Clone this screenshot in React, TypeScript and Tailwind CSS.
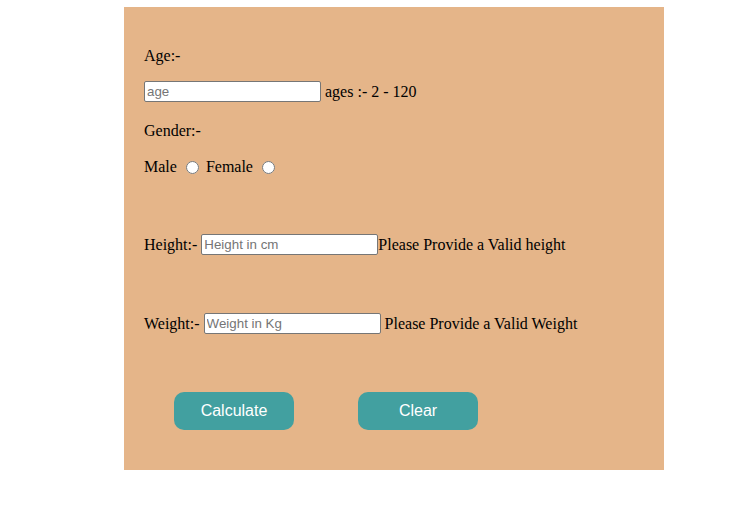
export default function App() {
  return (
    <div className="min-h-[507px] bg-white pt-[7px] pl-[124px] font-['Liberation_Serif',serif] text-[16px] text-black">
      <div className="w-[540px] bg-[#e5b589] pl-[20px] pt-[40px] pb-[40px]">
        {/* age */}
        <div className="flex h-[18px] items-center">Age:-</div>
        <div className="mt-[16px] flex h-[21px] items-center">
          <input
            type="text"
            placeholder="age"
            className="h-[21px] w-[177px] rounded-[2px] border border-[#767676] bg-white px-[2px] font-['Liberation_Sans',sans-serif] text-[13.33px] placeholder:text-[#757575]"
          />
          <span className="ml-[4px]">ages :- 2 - 120</span>
        </div>

        {/* gender */}
        <div className="mt-[20px] flex h-[18px] items-center">Gender:-</div>
        <div className="mt-[18px] flex h-[18px] items-center">
          <span>Male</span>
          <input type="radio" name="g" className="ml-[9px] mr-[3px] h-[13px] w-[13px]" />
          <span className="ml-[4px]">Female</span>
          <input type="radio" name="g" className="ml-[9px] mr-[3px] h-[13px] w-[13px]" />
        </div>

        {/* height */}
        <div className="mt-[58px] flex h-[21px] items-center">
          <span>Height:-</span>
          <input
            type="text"
            placeholder="Height in cm"
            className="ml-[4px] h-[21px] w-[177px] rounded-[2px] border border-[#767676] bg-white px-[2px] font-['Liberation_Sans',sans-serif] text-[13.33px] placeholder:text-[#757575]"
          />
          <span>Please Provide a Valid height</span>
        </div>

        {/* weight */}
        <div className="mt-[58px] flex h-[21px] items-center">
          <span>Weight:-</span>
          <input
            type="text"
            placeholder="Weight in Kg"
            className="ml-[4px] h-[21px] w-[177px] rounded-[2px] border border-[#767676] bg-white px-[2px] font-['Liberation_Sans',sans-serif] text-[13.33px] placeholder:text-[#757575]"
          />
          <span className="ml-[4px]">Please Provide a Valid Weight</span>
        </div>

        {/* buttons */}
        <div className="mt-[58px] flex gap-[64px] pl-[30px]">
          <button className="h-[38px] w-[120px] rounded-[10px] bg-[#42a0a0] font-['Liberation_Sans',sans-serif] text-[16px] text-white">
            Calculate
          </button>
          <button className="h-[38px] w-[120px] rounded-[10px] bg-[#42a0a0] font-['Liberation_Sans',sans-serif] text-[16px] text-white">
            Clear
          </button>
        </div>
      </div>
    </div>
  )
}
